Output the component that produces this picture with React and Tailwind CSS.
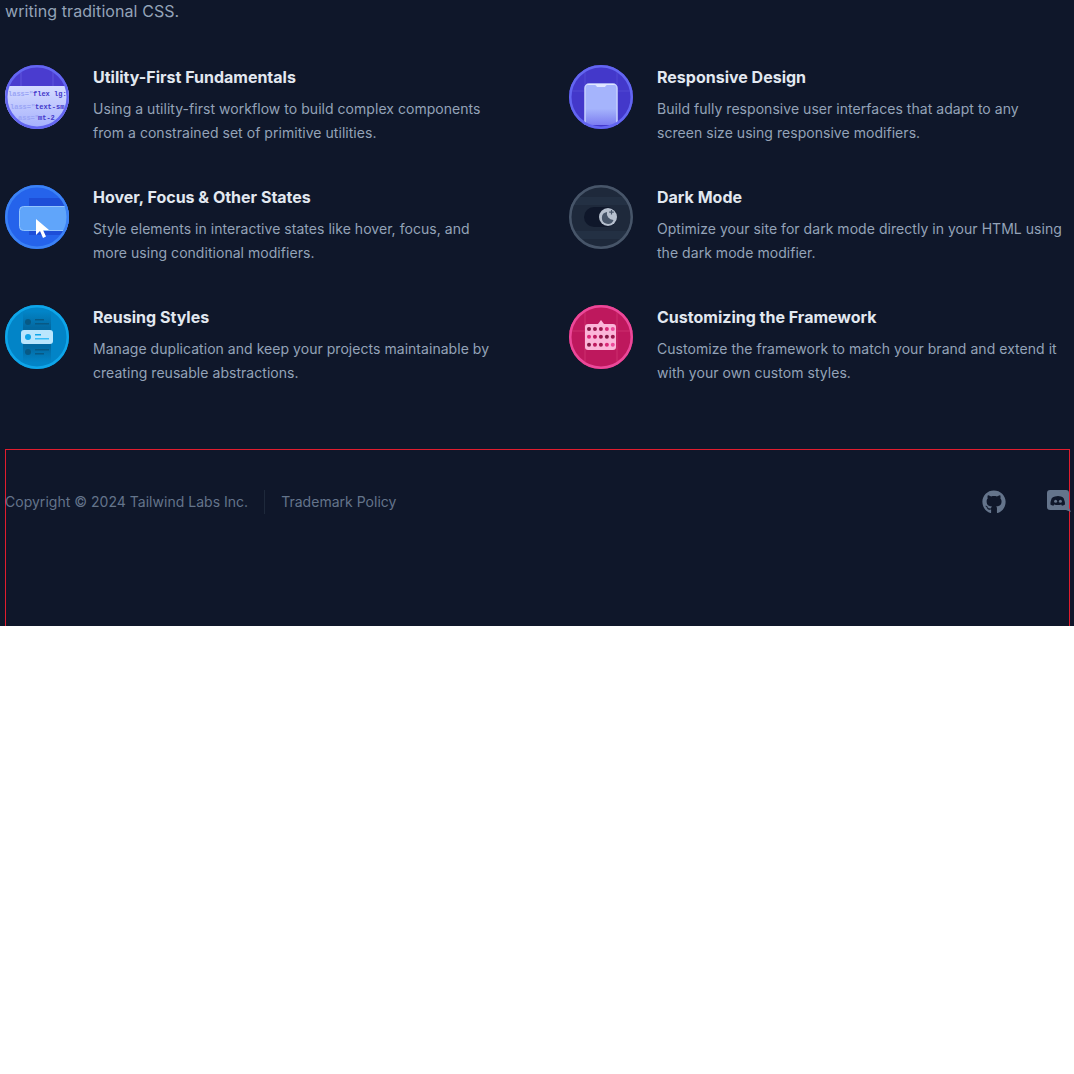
import { FaGithub } from "react-icons/fa";

const features = [
  {
    icon: <CodeIcon />,
    title: "Utility-First Fundamentals",
    text: ["Using a utility-first workflow to build complex components", "from a constrained set of primitive utilities."],
  },
  {
    icon: <PhoneIcon />,
    title: "Responsive Design",
    text: ["Build fully responsive user interfaces that adapt to any", "screen size using responsive modifiers."],
  },
  {
    icon: <HoverIcon />,
    title: "Hover, Focus & Other States",
    text: ["Style elements in interactive states like hover, focus, and", "more using conditional modifiers."],
  },
  {
    icon: <DarkIcon />,
    title: "Dark Mode",
    text: ["Optimize your site for dark mode directly in your HTML using", "the dark mode modifier."],
  },
  {
    icon: <ReuseIcon />,
    title: "Reusing Styles",
    text: ["Manage duplication and keep your projects maintainable by", "creating reusable abstractions."],
  },
  {
    icon: <CalendarIcon />,
    title: "Customizing the Framework",
    text: ["Customize the framework to match your brand and extend it", "with your own custom styles."],
  },
];

function Ring({ bg, border, children }) {
  return (
    <svg width="64" height="64" viewBox="0 0 64 64" className="shrink-0">
      <defs>
        <clipPath id="ring-clip">
          <circle cx="32" cy="32" r="32" />
        </clipPath>
      </defs>
      <g clipPath="url(#ring-clip)">
        <rect width="64" height="64" fill={bg} />
        {children}
      </g>
      <circle cx="32" cy="32" r="30.75" fill="none" stroke={border} strokeWidth="2.5" />
    </svg>
  );
}

function CodeIcon() {
  return (
    <Ring bg="#4a3ccf" border="#6366f1">
      <defs>
        <linearGradient id="code-fade" x1="0" y1="0" x2="0" y2="1">
          <stop offset="0" stopColor="#d5dbff" />
          <stop offset="1" stopColor="#a5b0fc" />
        </linearGradient>
      </defs>
      <path d="M16 0V21M48 0V21" stroke="#5f55dc" strokeWidth="1" />
      <rect x="0" y="21" width="64" height="43" fill="url(#code-fade)" />
      <g fontFamily="Liberation Mono, monospace" fontSize="7" fontWeight="700">
        <text x="3" y="31" fill="#9aa5f5">lass="</text>
        <text x="28" y="31" fill="#4338ca">flex lg:</text>
        <text x="5" y="44" fill="#9aa5f5">lass="</text>
        <text x="30" y="44" fill="#4338ca">text-sm</text>
        <text x="13" y="55" fill="#9aa5f5">ass="</text>
        <text x="33" y="55" fill="#4338ca">mt-2</text>
      </g>
    </Ring>
  );
}

function PhoneIcon() {
  return (
    <Ring bg="#4338ca" border="#6366f1">
      <defs>
        <linearGradient id="phone-fade" x1="0" y1="0" x2="0" y2="1">
          <stop offset="0.6" stopColor="#a5b4fc" />
          <stop offset="1" stopColor="#7c7df0" />
        </linearGradient>
      </defs>
      <path d="M0 26H64M16 0V64M48 0V64" stroke="#5249d2" strokeWidth="1" />
      <path d="M16 60V23a4 4 0 0 1 4-4h24a4 4 0 0 1 4 4v37z" fill="url(#phone-fade)" />
      <path d="M16 60V23a4 4 0 0 1 4-4h24a4 4 0 0 1 4 4v37" fill="none" stroke="#c7d2fe" strokeWidth="1.5" />
      <path d="M20 19h24a4 4 0 0 1 2 1h-8q-1 0-2 2h-8q-1-2-2-2h-8a4 4 0 0 1 2-1z" fill="#e0e7ff" />
    </Ring>
  );
}

function HoverIcon() {
  return (
    <Ring bg="#2563eb" border="#3b82f6">
      <rect x="24" y="13" width="40" height="37" fill="#1d4ed8" />
      <rect x="14.5" y="21.5" width="56" height="24" rx="4" fill="#60a5fa" stroke="#93c5fd" strokeWidth="1" />
      <path d="M31 34V50L35 46L38 53L41 51.5L38 45H44z" fill="#fff" />
    </Ring>
  );
}

function DarkIcon() {
  return (
    <Ring bg="#1e293b" border="#475569">
      <rect x="0" y="12" width="64" height="8" fill="#334155" opacity="0.3" />
      <rect x="0" y="46" width="64" height="8" fill="#334155" opacity="0.3" />
      <rect x="15" y="22" width="33" height="20" rx="10" fill="#0f172a" />
      <circle cx="39" cy="32" r="9" fill="#b6c0ce" />
      <path d="M38 27a6 6 0 1 0 6.5 8a6.5 6.5 0 0 1-6.5-8z" fill="#475569" />
      <path d="M42.5 25v4.5M40.2 27.2h4.6" stroke="#475569" strokeWidth="1.2" />
    </Ring>
  );
}

function ReuseIcon() {
  return (
    <Ring bg="#0284c7" border="#0ea5e9">
      <defs>
        <linearGradient id="reuse-fade" x1="0" y1="0" x2="0" y2="1">
          <stop offset="0.1" stopColor="#0369a1" stopOpacity="0" />
          <stop offset="0.35" stopColor="#0369a1" />
          <stop offset="0.65" stopColor="#0369a1" />
          <stop offset="0.9" stopColor="#0369a1" stopOpacity="0" />
        </linearGradient>
      </defs>
      <rect x="18" y="0" width="28" height="64" fill="url(#reuse-fade)" />
      <circle cx="23" cy="17" r="3" fill="#075985" />
      <rect x="30" y="14" width="9" height="1.5" fill="#075985" />
      <rect x="30" y="18" width="14" height="1.5" fill="#075985" />
      <circle cx="23" cy="47" r="3" fill="#075985" />
      <rect x="30" y="44" width="14" height="1.5" fill="#075985" />
      <rect x="30" y="48" width="9" height="1.5" fill="#075985" />
      <rect x="16" y="25" width="32" height="14" rx="3" fill="#bae6fd" />
      <circle cx="23" cy="32" r="3" fill="#0ea5e9" />
      <rect x="30" y="29" width="6" height="1.5" fill="#0ea5e9" />
      <rect x="30" y="33" width="14" height="1.5" fill="#38bdf8" />
    </Ring>
  );
}

function CalendarIcon() {
  const colors = [
    ["#831843", "#9d174d", "#9d174d", "#db2777", "#ec4899"],
    ["#db2777", "#be185d", "#9d174d", "#831843", "#9d174d"],
    ["#831843", "#be185d", "#9d174d", "#db2777", "#ec4899"],
  ];
  return (
    <Ring bg="#be185d" border="#ec4899">
      <path d="M0 26H64M16 0V64M48 0V64" stroke="#cc2f6e" strokeWidth="1" />
      <path d="M29 19L32 15L35 19z" fill="#fbb6d9" />
      <rect x="16" y="19" width="31" height="26" rx="3" fill="#fbb6d9" />
      {colors.map((row, r) =>
        row.map((c, i) => <circle key={`${r}-${i}`} cx={20 + i * 5.95} cy={24 + r * 7.85} r="2" fill={c} />)
      )}
    </Ring>
  );
}

function DiscordIcon() {
  return (
    <svg width="24" height="24" viewBox="0 0 24 24" className="shrink-0">
      <path d="M3 0H19a3 3 0 0 1 3 3V18L24 22L19 20H3a3 3 0 0 1-3-3V3a3 3 0 0 1 3-3z" fill="#64748b" />
      <path d="M8 6.5q3-1 6 0q2 .5 2.8 2q1.2 3 1.2 6q-1.2 1-3 1.2l-.8-1.2q-3.5 1-7 0l-.8 1.2q-1.8-.2-3-1.2q0-3 1.2-6q.8-1.5 3.4-2z" fill="#0f172a" />
      <circle cx="8.6" cy="11.2" r="1.5" fill="#64748b" />
      <circle cx="13.4" cy="11.2" r="1.5" fill="#64748b" />
    </svg>
  );
}

function Feature({ icon, title, text }) {
  return (
    <div className="flex gap-6 min-w-0">
      {icon}
      <div className="min-w-0">
        <h3 className="text-base leading-6 font-bold text-[#e2e8f0] whitespace-nowrap">{title}</h3>
        <p className="mt-2 text-sm leading-6 tracking-[0.04px] text-[#94a3b8] whitespace-nowrap">
          {text[0]}
          <br />
          {text[1]}
        </p>
      </div>
    </div>
  );
}

export default function App() {
  return (
    <div className="bg-white min-h-[1074px] font-['Inter',sans-serif]">
      <div className="h-[626px] overflow-hidden bg-[#0f172a] pl-[5px] pr-[4px]">
        <p className="text-base leading-6 tracking-[0.08px] text-[#94a3b8] h-[23px] -mt-px">writing traditional CSS.</p>
        <div className="mt-[43px] grid grid-cols-2 gap-x-[63px] gap-y-10">
          {features.map((f) => (
            <Feature key={f.title} {...f} />
          ))}
        </div>
        <footer className="mt-16 h-[177px] border border-[#e11d2e] border-b-0 flex items-start justify-between pt-10">
          <div className="flex items-center -ml-px text-sm leading-6 tracking-[0.02px] text-[#64748b]">
            <span>Copyright © 2024 Tailwind Labs Inc.</span>
            <span className="mx-4 h-6 w-px bg-[#1e293b]" />
            <span>Trademark Policy</span>
          </div>
          <div className="flex items-center gap-[41px] text-[#64748b] -mr-[2px]">
            <FaGithub className="w-6 h-6" />
            <DiscordIcon />
          </div>
        </footer>
      </div>
    </div>
  );
}
